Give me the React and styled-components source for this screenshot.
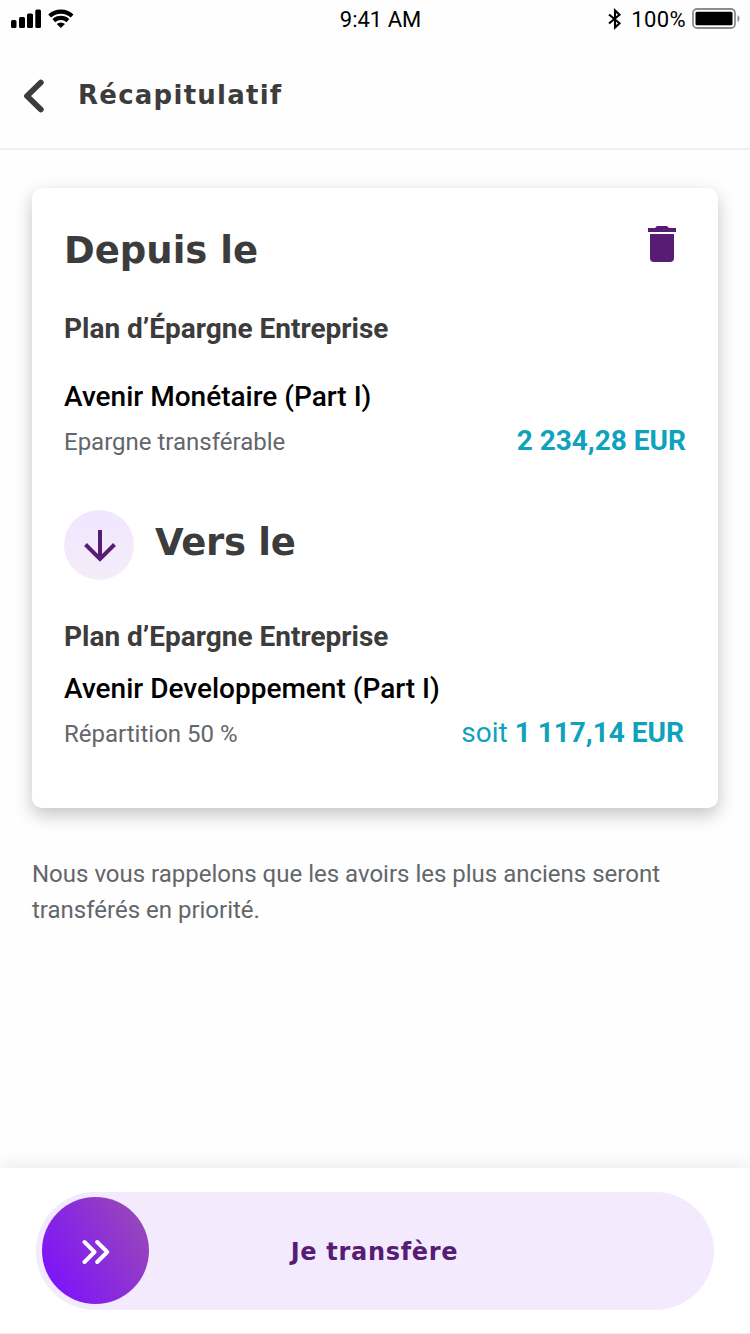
import styled, { createGlobalStyle } from "styled-components";

const App = () => {

    const from = { plan: "Plan d’Épargne Entreprise", fund: "Avenir Monétaire (Part I)", detail: "Epargne transférable", amount: "2 234,28 EUR" };
    const to = { plan: "Plan d’Epargne Entreprise", fund: "Avenir Developpement (Part I)", detail: "Répartition 50 %", prefix: "soit ", amount: "1 117,14 EUR" };

    return (
        <>
            <GlobalStyle />
            <Screen>
                <StatusBar />
                <Header>
                    <BackButton aria-label="Retour">
                        <svg width="24" height="36" viewBox="0 0 24 36" fill="none" stroke="#3c3c3c" strokeWidth="5.8" strokeLinecap="round" strokeLinejoin="round">
                            <path d="M18.8 4.5 5 18l13.800 13.500" />
                        </svg>
                    </BackButton>
                    <HeaderTitle>Récapitulatif</HeaderTitle>
                </Header>
                <Content>
                    <Card>
                        <CardTop>
                            <SectionTitle $spacing="0">Depuis le</SectionTitle>
                            <TrashIcon />
                        </CardTop>
                        <Account {...from} gap="32px" />
                        <Direction>
                            <ArrowBadge>
                                <svg width="32" height="33" viewBox="0 0 32 33" fill="none" stroke="#571c74" strokeWidth="4">
                                    <path d="M16 0v29M1.500 14.500 16 29l14.500-14.500" />
                                </svg>
                            </ArrowBadge>
                            <SectionTitle $spacing="-0.3px">Vers le</SectionTitle>
                        </Direction>
                        <Account {...to} gap="16px" inset="2px" />
                    </Card>
                    <Notice>Nous vous rappelons que les avoirs les plus anciens seront transférés en priorité.</Notice>
                </Content>
                <Footer>
                    <SwipeButton>
                        <Knob>
                            <svg width="28" height="26" viewBox="0 0 28 26" fill="none" stroke="#fff" strokeWidth="3.900" strokeLinecap="round" strokeLinejoin="round">
                                <path d="M2.500 3 12.500 13l-10 10M15.200 3l10 10-10 10" />
                            </svg>
                        </Knob>
                        <SwipeLabel>Je transfère</SwipeLabel>
                    </SwipeButton>
                </Footer>
            </Screen>
        </>
    );
}

const Account = (props) => {
    return (
        <AccountDiv $gap={props.gap}>
            <PlanName>{props.plan}</PlanName>
            <div>
                <FundName>{props.fund}</FundName>
                <AmountRow $inset={props.inset}>
                    <Detail>{props.detail}</Detail>
                    <Amount>{props.prefix}<strong>{props.amount}</strong></Amount>
                </AmountRow>
            </div>
        </AccountDiv>
    );
}

const StatusBar = () => (
    <StatusDiv>
        <StatusGroup>
            <svg width="64" height="20" viewBox="0 0 64 20">
                <rect x="0" y="11" width="5.500" height="8" rx="1.500" />
                <rect x="8" y="8" width="6" height="11" rx="1.500" />
                <rect x="16" y="4.500" width="6" height="14.500" rx="1.500" />
                <rect x="24.300" y="0.500" width="5.700" height="18.500" rx="1.500" />
                <g fill="none" stroke="#000" strokeWidth="4.200">
                    <path d="M38.600 7a16.800 16.800 0 0 1 22.500 0" />
                    <path d="M42.800 11.600a10.700 10.700 0 0 1 14.100 0" />
                </g>
                <path d="M45.700 15.100a6.100 6.100 0 0 1 8.300 0L49.850 19z" />
            </svg>
        </StatusGroup>
        <Clock>9:41 AM</Clock>
        <StatusGroup $end>
            <svg width="14" height="22" viewBox="0 0 14 22" fill="none" stroke="#000" strokeWidth="2.100">
                <path d="M1 6.500 11.500 15.300 7 19.500V2.500l4.500 4.200L1 15.500" />
            </svg>
            <Percent>100%</Percent>
            <svg width="49" height="22" viewBox="0 0 49 22">
                <rect x="1" y="1" width="42" height="19" rx="4" fill="none" stroke="#8c8c8c" strokeWidth="1.800" />
                <rect x="3.500" y="3.700" width="37" height="13.600" rx="1.500" />
                <path d="M45.500 7a4 4 0 0 1 0 7z" fill="#8c8c8c" />
            </svg>
        </StatusGroup>
    </StatusDiv>
);

const TrashIcon = () => (
    <svg width="28" height="36" viewBox="0 0 28 36" fill="#571c74">
        <path d="M0 2h7l2-2h10l2 2h7v4H0zM2 8h24v24a4 4 0 0 1-4 4H6a4 4 0 0 1-4-4z" />
    </svg>
);

const GlobalStyle = createGlobalStyle`
    * {
        box-sizing: border-box;
    }

    body {
        margin: 0;
        background: #fefefe;
        font-family: Roboto, "Liberation Sans", sans-serif;
    }
`

const Screen = styled.div`
    display: flex;
    flex-direction: column;
    height: 1334px;
    overflow: hidden;
    color: #000;
`

const StatusDiv = styled.div`
    display: grid;
    grid-template-columns: 1fr auto 1fr;
    align-items: center;
    height: 40px;
    padding: 0 9px 3px 11px;

    svg {
        display: block;
    }
`

const StatusGroup = styled.div`
    display: flex;
    align-items: center;
    justify-content: ${(props) => (props.$end ? "flex-end" : "flex-start")};
`

const Clock = styled.div`
    padding: 3px 0 0 9px;
    font-size: 22px;
    line-height: 26px;
`

const Percent = styled.div`
    margin: 3px 6px 0 9px;
    font-size: 22px;
    line-height: 26px;
    letter-spacing: 0.4px;
`

const Header = styled.header`
    display: flex;
    align-items: center;
    height: 110px;
    padding-left: 22px;
    border-bottom: 2px solid #f0f0f0;
`

const BackButton = styled.button`
    display: flex;
    padding: 4px 0 0;
    border: 0;
    background: none;
`

const HeaderTitle = styled.h1`
    margin: 2px 0 0 32px;
    color: #3c3c3c;
    font-family: "DejaVu Sans", sans-serif;
    font-size: 26px;
    line-height: 36px;
    font-weight: 700;
    letter-spacing: 1.25px;
`

const Content = styled.main`
    flex: 1;
    padding: 38px 32px 0;
`

const Card = styled.section`
    height: 620px;
    padding: 37px 32px 0;
    border-radius: 10px;
    background: #fff;
    box-shadow: 0 7px 18px rgba(0, 0, 0, 0.23);
`

const CardTop = styled.div`
    display: flex;
    justify-content: space-between;
    height: 86px;
    padding: 1px 10px 0 0;
`

const SectionTitle = styled.h2`
    margin: 0;
    color: #3c3c3c;
    font-family: "DejaVu Sans", sans-serif;
    font-size: 37px;
    line-height: 50px;
    font-weight: 700;
    letter-spacing: ${(props) => props.$spacing};
`

const AccountDiv = styled.div`
    display: flex;
    flex-direction: column;
    gap: ${(props) => props.$gap};
`

const PlanName = styled.div`
    color: #3c3c3c;
    font-size: 28px;
    line-height: 36px;
    font-weight: 700;
`

const FundName = styled.div`
    font-size: 28px;
    line-height: 36px;
    font-weight: 500;
`

const AmountRow = styled.div`
    display: flex;
    align-items: baseline;
    justify-content: space-between;
    height: 38px;
    margin-top: 8px;
    padding-right: ${(props) => props.$inset || 0};
`

const Detail = styled.div`
    color: #63666a;
    font-size: 24px;
    line-height: 36px;
`

const Amount = styled.div`
    color: #0ea2bd;
    font-size: 28px;
    line-height: 36px;
`

const Direction = styled.div`
    display: flex;
    align-items: center;
    height: 70px;
    margin: 49px 0 39px;

    h2 {
        margin: 0 0 4px 21px;
    }
`

const ArrowBadge = styled.div`
    display: flex;
    align-items: center;
    justify-content: center;
    width: 70px;
    height: 70px;
    padding: 3px 0 0 2px;
    border-radius: 50%;
    background: linear-gradient(#f1e6ff, #f4edf8);
`

const Notice = styled.p`
    margin: 48px 0 0;
    color: #63666a;
    font-size: 24px;
    line-height: 36px;
`

const Footer = styled.footer`
    height: 166px;
    padding: 24px 36px;
    border-bottom: 1px solid #f0f0f0;
    background: #fff;
    box-shadow: 0 -2px 20px rgba(0, 0, 0, 0.09);
`

const SwipeButton = styled.div`
    display: flex;
    align-items: center;
    height: 118px;
    padding: 0 6px 1px;
    border-radius: 59px;
    background: #f3eafd;
`

const Knob = styled.div`
    display: flex;
    align-items: center;
    justify-content: center;
    width: 107px;
    height: 107px;
    padding-top: 3px;
    border-radius: 50%;
    background: linear-gradient(60deg, #7d12fb 10%, #9746bb 88%);
`

const SwipeLabel = styled.div`
    flex: 1;
    padding: 2px 108px 0 0;
    color: #571c74;
    font-family: "DejaVu Sans", sans-serif;
    font-size: 24px;
    line-height: 36px;
    font-weight: 700;
    letter-spacing: 0.7px;
    text-align: center;
`

export default App;
